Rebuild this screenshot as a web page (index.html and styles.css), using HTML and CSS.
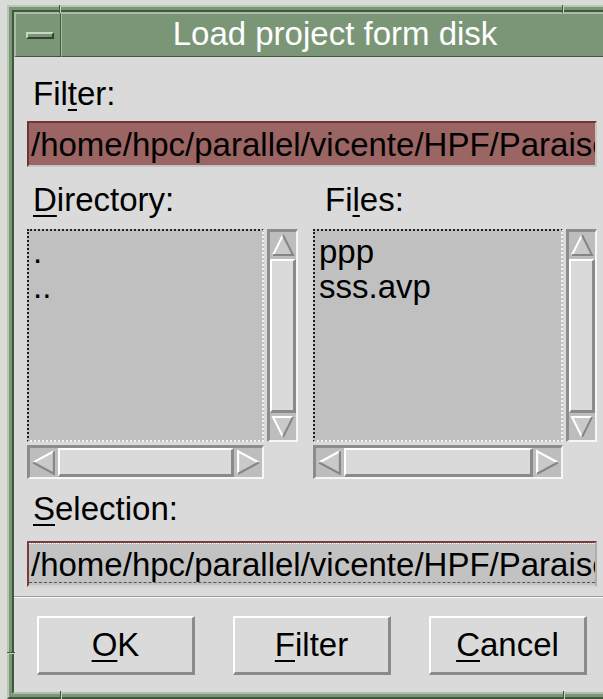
FILE: index.html
```html
<!DOCTYPE html>
<html>
<head>
<meta charset="utf-8">
<title>Load project form disk</title>
<link rel="stylesheet" href="styles.css">
</head>
<body>
<div class="window">
  <span class="notch notch-v notch-tl"></span>
  <span class="notch notch-v notch-tr"></span>
  <span class="notch notch-h notch-lb"></span>
  <span class="notch notch-v notch-bl"></span>
  <span class="notch notch-v notch-br"></span>
  <div class="frame-inner">
    <div class="titlebar">
      <div class="menu-btn"><span class="menu-bar"></span></div>
      <div class="title">Load project form disk</div>
    </div>
    <div class="dialog">
      <div class="label">Fil<u>t</u>er:</div>
      <div class="field field-filter"><div class="field-text">/home/hpc/parallel/vicente/HPF/Paraiso</div></div>

      <div class="lists">
        <div class="col">
          <div class="label"><u>D</u>irectory:</div>
          <div class="scrolled">
            <div class="list">
              <div class="item">.</div>
              <div class="item">..</div>
            </div>
            <div class="vscroll">
              <svg class="arrow" width="26" height="26" viewBox="0 0 26 26"><polygon points="13,3 23,23 3,23" fill="#c9c9c9"/><polyline points="3,23 13,3" stroke="#fff" stroke-width="2" fill="none"/><polyline points="13,3 23,23 3,23" stroke="#858585" stroke-width="2" fill="none"/></svg>
              <div class="thumb thumb-v"></div>
              <svg class="arrow" width="26" height="26" viewBox="0 0 26 26"><polygon points="3,3 23,3 13,23" fill="#c9c9c9"/><polyline points="13,23 3,3 23,3" stroke="#fff" stroke-width="2" fill="none"/><polyline points="23,3 13,23" stroke="#858585" stroke-width="2" fill="none"/></svg>
            </div>
            <div class="hscroll">
              <svg class="arrow" width="27" height="29" viewBox="0 0 26 26" preserveAspectRatio="none"><polygon points="3,13 23,3 23,23" fill="#c9c9c9"/><polyline points="3,13 23,3" stroke="#fff" stroke-width="2" fill="none"/><polyline points="23,3 23,23 3,13" stroke="#858585" stroke-width="2" fill="none"/></svg>
              <div class="thumb thumb-h"></div>
              <svg class="arrow" width="27" height="29" viewBox="0 0 26 26" preserveAspectRatio="none"><polygon points="3,3 23,13 3,23" fill="#c9c9c9"/><polyline points="3,23 3,3 23,13" stroke="#fff" stroke-width="2" fill="none"/><polyline points="23,13 3,23" stroke="#858585" stroke-width="2" fill="none"/></svg>
            </div>
          </div>
        </div>

        <div class="col">
          <div class="label label-files">Fi<u>l</u>es:</div>
          <div class="scrolled">
            <div class="list">
              <div class="item">ppp</div>
              <div class="item">sss.avp</div>
            </div>
            <div class="vscroll">
              <svg class="arrow" width="26" height="26" viewBox="0 0 26 26"><polygon points="13,3 23,23 3,23" fill="#c9c9c9"/><polyline points="3,23 13,3" stroke="#fff" stroke-width="2" fill="none"/><polyline points="13,3 23,23 3,23" stroke="#858585" stroke-width="2" fill="none"/></svg>
              <div class="thumb thumb-v"></div>
              <svg class="arrow" width="26" height="26" viewBox="0 0 26 26"><polygon points="3,3 23,3 13,23" fill="#c9c9c9"/><polyline points="13,23 3,3 23,3" stroke="#fff" stroke-width="2" fill="none"/><polyline points="23,3 13,23" stroke="#858585" stroke-width="2" fill="none"/></svg>
            </div>
            <div class="hscroll">
              <svg class="arrow" width="27" height="29" viewBox="0 0 26 26" preserveAspectRatio="none"><polygon points="3,13 23,3 23,23" fill="#c9c9c9"/><polyline points="3,13 23,3" stroke="#fff" stroke-width="2" fill="none"/><polyline points="23,3 23,23 3,13" stroke="#858585" stroke-width="2" fill="none"/></svg>
              <div class="thumb thumb-h"></div>
              <svg class="arrow" width="27" height="29" viewBox="0 0 26 26" preserveAspectRatio="none"><polygon points="3,3 23,13 3,23" fill="#c9c9c9"/><polyline points="3,23 3,3 23,13" stroke="#fff" stroke-width="2" fill="none"/><polyline points="23,13 3,23" stroke="#858585" stroke-width="2" fill="none"/></svg>
            </div>
          </div>
        </div>
      </div>

      <div class="label label-selection"><u>S</u>election:</div>
      <div class="field field-selection"><div class="field-text">/home/hpc/parallel/vicente/HPF/Paraiso</div></div>

      <div class="separator"></div>

      <div class="buttons">
        <button class="btn" type="button"><u>O</u>K</button>
        <button class="btn" type="button"><u>F</u>ilter</button>
        <button class="btn" type="button"><u>C</u>ancel</button>
      </div>
    </div>
  </div>
</div>
</body>
</html>
```

FILE: styles.css
```css
html, body {
  margin: 0;
  padding: 0;
}

html {
  overflow: hidden;
}

body {
  width: 603px;
  height: 699px;
  overflow: hidden;
  background: #d8dbd6;
  font-family: "Liberation Sans", Arial, sans-serif;
  font-size: 33px;
  color: #000;
}

u {
  text-decoration: underline;
  text-decoration-thickness: 2px;
  text-underline-offset: 4px;
}

/* window manager frame */
.window {
  position: relative;
  margin: 5px 0 0 7px;
  width: 608px;
  box-sizing: border-box;
  background: #7b9677;
  border-top: 2px solid #b9c8b5;
  border-left: 2px solid #b9c8b5;
  border-right: 2px solid #3f573b;
  border-bottom: 2px solid #3f573b;
  padding: 3px 3px 3px 3px;
}

.frame-inner {
  border-top: 2px solid #3f573b;
  border-left: 2px solid #3f573b;
  border-right: 2px solid #aebfaa;
  border-bottom: 2px solid #aebfaa;
}

/* resize-handle marks cut into the frame */
.notch {
  position: absolute;
}

.notch-v {
  width: 2px;
  height: 8px;
  background: linear-gradient(to right, #3f573b 0 1px, #c6d3c2 1px 2px);
}

.notch-h {
  width: 8px;
  height: 2px;
  background: linear-gradient(to bottom, #3f573b 0 1px, #c6d3c2 1px 2px);
}

.notch-tl { top: -2px; left: 50px; }
.notch-tr { top: -2px; left: 553px; }
.notch-lb { top: 645px; left: -2px; }
.notch-bl { bottom: -2px; left: 51px; }
.notch-br { bottom: -2px; left: 554px; }

.titlebar {
  display: flex;
  height: 45px;
  background: #7b9677;
}

.menu-btn {
  width: 47px;
  box-sizing: border-box;
  border-top: 2px solid #a9bca5;
  border-left: 2px solid #a9bca5;
  border-right: 1px solid #3f573b;
  border-bottom: 1px solid #3f573b;
  display: flex;
  align-items: center;
  justify-content: center;
  padding-left: 4px;
}

.menu-bar {
  width: 28px;
  height: 7px;
  box-sizing: border-box;
  background: #7b9677;
  border-top: 2px solid #c8d6c4;
  border-left: 2px solid #c8d6c4;
  border-right: 2px solid #2f452c;
  border-bottom: 2px solid #2f452c;
}

.title {
  flex: 1;
  box-sizing: border-box;
  border-top: 2px solid #a9bca5;
  border-left: 1px solid #a9bca5;
  border-bottom: 1px solid #3f573b;
  color: #fff;
  text-align: center;
  line-height: 40px;
  white-space: nowrap;
}

/* dialog body */
.dialog {
  background: #dadada;
  padding: 19px 11px 17px 13px;
}

.label {
  line-height: 35px;
  padding-left: 6px;
  white-space: nowrap;
}

.field {
  height: 46px;
  box-sizing: border-box;
  margin-top: 10px;
  overflow: hidden;
  white-space: nowrap;
}

.field-text {
  line-height: 37px;
  padding: 3px 0 0 2px;
  overflow: hidden;
}

.field-filter {
  background: #9b6563;
  border-top: 2px solid #6b3734;
  border-left: 2px solid #6b3734;
  border-right: 2px solid #c4c4c4;
  border-bottom: 2px solid #c4c4c4;
}

.field-selection {
  margin-top: 15px;
  background: #c2c2c2;
  border-top: 2px solid #7b3b3b;
  border-left: 2px solid #7b3b3b;
  border-right: 2px solid #adadad;
  border-bottom: 2px solid #d2d2d2;
}

.field-selection .field-text {
  height: 40px;
  box-sizing: border-box;
  padding-top: 2px;
  border-top: 1px dotted #fff;
  border-bottom: 1px dashed #555;
}

.lists {
  display: grid;
  grid-template-columns: 271px 284px;
  column-gap: 15px;
  margin-top: 15px;
}

.label-files {
  padding-left: 12px;
}

.scrolled {
  display: grid;
  grid-template-columns: 1fr 31px;
  grid-template-rows: 213px 34px;
  column-gap: 3px;
  row-gap: 3px;
  margin-top: 12px;
}

.list {
  background: #c0c0c0;
  border-top: 2px dotted #1e1e1e;
  border-left: 2px dotted #1e1e1e;
  border-right: 2px dotted #f2f2f2;
  border-bottom: 2px dotted #f2f2f2;
  padding: 3px 0 0 4px;
  overflow: hidden;
}

.item {
  line-height: 35px;
  white-space: nowrap;
}

.vscroll,
.hscroll {
  display: flex;
  box-sizing: border-box;
  background: #bdbdbd;
  border-top: 3px solid #8c8c8c;
  border-left: 3px solid #8c8c8c;
  border-right: 2px solid #f6f6f6;
  border-bottom: 2px solid #f6f6f6;
}

.vscroll {
  flex-direction: column;
}

.hscroll {
  grid-column: 1;
  align-items: stretch;
}

.arrow {
  display: block;
  flex: none;
}

.thumb {
  flex: 1;
  box-sizing: border-box;
  background: #dadada;
  border-top: 2px solid #fff;
  border-left: 2px solid #fff;
  border-right: 3px solid #8a8a8a;
  border-bottom: 3px solid #8a8a8a;
}

.thumb-v {
  margin: 1px 0;
}

.thumb-h {
  margin: 0 1px;
}

.label-selection {
  margin-top: 12px;
}

.separator {
  margin: 9px -11px 0 -13px;
  border-top: 1px solid #9a9a9a;
  border-bottom: 1px solid #fbfbfb;
}

.buttons {
  display: grid;
  grid-template-columns: repeat(3, 1fr);
  column-gap: 38px;
  padding: 0 10px;
  margin-top: 18px;
}

.btn {
  height: 59px;
  box-sizing: border-box;
  background: #dadada;
  border-top: 2px solid #fff;
  border-left: 2px solid #fff;
  border-right: 3px solid #8a8a8a;
  border-bottom: 3px solid #8a8a8a;
  font: inherit;
  color: #000;
  padding: 0;
}
```
